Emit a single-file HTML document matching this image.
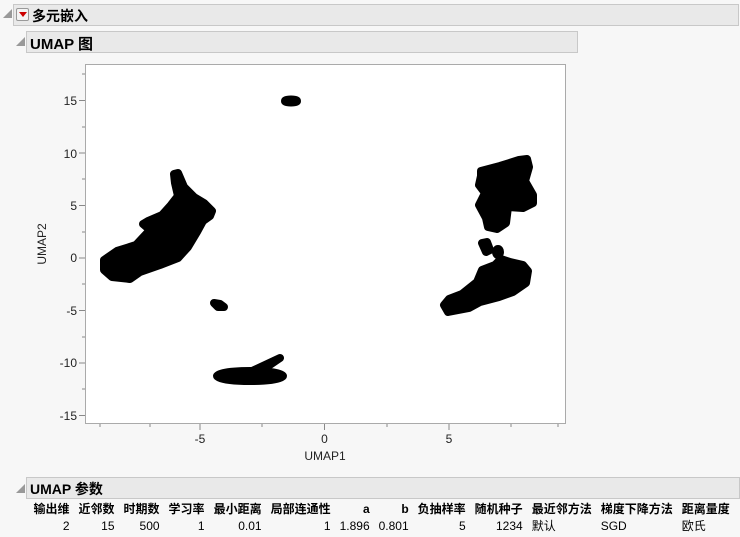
<!DOCTYPE html>
<html><head><meta charset="utf-8"><style>
body{margin:0;width:740px;height:537px;background:#f7f7f7;font-family:"Liberation Sans","Noto Sans CJK SC",sans-serif;position:relative;overflow:hidden}
.bar{position:absolute;background:#e9e9e9;border:1px solid #c8c8c8;font-weight:bold;font-size:14px;color:#000}
.tri{position:absolute;font-size:9px;color:#999}
table{position:absolute;left:29px;top:500px;border-collapse:collapse;font-size:12px}
td{padding:0 4.5px;height:16px;white-space:nowrap}
th{padding:0 4.5px;height:16px;white-space:nowrap;font-weight:bold;text-align:right}
</style></head><body>
<div class="tri" style="left:3px;top:7px">◢</div>
<div class="bar" style="left:13px;top:4px;width:724px;height:20px"></div>
<div style="position:absolute;left:16px;top:8px;width:11px;height:11px;border:1px solid #999;border-radius:2px;background:#f4f4f4"><div style="position:absolute;left:2px;top:3px;width:0;height:0;border-left:4px solid transparent;border-right:4px solid transparent;border-top:5px solid #c00"></div></div>
<div style="position:absolute;left:32px;top:6px;font-weight:bold;font-size:14px">多元嵌入</div>
<div class="tri" style="left:16px;top:35px">◢</div>
<div class="bar" style="left:26px;top:31px;width:550px;height:20px"></div>
<div style="position:absolute;left:30px;top:33px;font-weight:bold;font-size:15px">UMAP 图</div>

<svg style="position:absolute;left:0;top:0" width="740" height="470" font-family="Liberation Sans,sans-serif" font-size="12">
<rect x="85.5" y="64.5" width="480" height="359" fill="#fff" stroke="#aaa"/>
<g stroke="#888">
<line x1="79" y1="100.5" x2="85" y2="100.5"/><line x1="79" y1="153" x2="85" y2="153"/><line x1="79" y1="205.5" x2="85" y2="205.5"/><line x1="79" y1="258" x2="85" y2="258"/><line x1="79" y1="310.5" x2="85" y2="310.5"/><line x1="79" y1="363" x2="85" y2="363"/><line x1="79" y1="415.5" x2="85" y2="415.5"/>
<line x1="82" y1="74" x2="85" y2="74"/><line x1="82" y1="127" x2="85" y2="127"/><line x1="82" y1="179" x2="85" y2="179"/><line x1="82" y1="232" x2="85" y2="232"/><line x1="82" y1="284" x2="85" y2="284"/><line x1="82" y1="337" x2="85" y2="337"/><line x1="82" y1="389" x2="85" y2="389"/>
<line x1="200" y1="424" x2="200" y2="430"/><line x1="324.5" y1="424" x2="324.5" y2="430"/><line x1="449" y1="424" x2="449" y2="430"/>
<line x1="100" y1="424" x2="100" y2="427"/><line x1="150" y1="424" x2="150" y2="427"/><line x1="262" y1="424" x2="262" y2="427"/><line x1="387" y1="424" x2="387" y2="427"/><line x1="511" y1="424" x2="511" y2="427"/><line x1="558" y1="424" x2="558" y2="427"/>
</g>
<g text-anchor="end" fill="#222">
<text x="77" y="105">15</text><text x="77" y="158">10</text><text x="77" y="210">5</text><text x="77" y="262">0</text><text x="77" y="315">-5</text><text x="77" y="367">-10</text><text x="77" y="420">-15</text>
</g>
<g text-anchor="middle" fill="#222">
<text x="200" y="443">-5</text><text x="324.5" y="443">0</text><text x="449" y="443">5</text>
<text x="325" y="460">UMAP1</text>
<text transform="translate(46,244) rotate(-90)">UMAP2</text>
</g>
<g fill="#000" stroke="#000" stroke-width="8" stroke-linejoin="round" stroke-linecap="round">
<polygon points="174,174 178,173 184,187 194,197 204,203 212,211 210,216 203,221 197,232 188,247 178,258 160,265 140,272 130,279 112,277 104,270 104,260 117,251 136,245 150,230 143,224 148,221 162,215 171,205 178,196 175,183"/>
<polygon points="481,171 500,166 519,160 527,159 529,167 525,181 533,195 533,203 523,208 508,207 506,223 497,229 488,227 486,218 479,205 485,193 479,185 481,176"/>
<polygon points="449,299 462,294 477,282 482,270 495,265 501,259 510,262 523,265 528,271 526,283 513,292 499,297 480,302 469,308 448,312 444,305"/>
<polygon points="482,243 487,242 490,250 486,252"/>
<ellipse cx="498" cy="252" rx="2" ry="3"/>
<ellipse cx="250" cy="376" rx="33" ry="5"/>
<polygon points="250,372 280,358 258,373"/>
<polygon points="214,303 220,304 224,307 218,307"/>
<ellipse cx="291" cy="101" rx="6" ry="1.5"/>
</g>
</svg>

<div class="tri" style="left:16px;top:482px">◢</div>
<div class="bar" style="left:26px;top:477px;width:712px;height:20px"></div>
<div style="position:absolute;left:30px;top:479px;font-weight:bold;font-size:14px">UMAP 参数</div>
<table>
<tr><th>输出维</th><th>近邻数</th><th>时期数</th><th>学习率</th><th>最小距离</th><th>局部连通性</th><th style="padding-left:16px">a</th><th style="padding-left:24px">b</th><th>负抽样率</th><th>随机种子</th><th style="text-align:left">最近邻方法</th><th style="text-align:left">梯度下降方法</th><th style="text-align:left">距离量度</th></tr>
<tr><td style="text-align:right">2</td><td style="text-align:right">15</td><td style="text-align:right">500</td><td style="text-align:right">1</td><td style="text-align:right">0.01</td><td style="text-align:right">1</td><td style="text-align:right">1.896</td><td style="text-align:right">0.801</td><td style="text-align:right">5</td><td style="text-align:right">1234</td><td>默认</td><td>SGD</td><td>欧氏</td></tr>
</table>
</body></html>
